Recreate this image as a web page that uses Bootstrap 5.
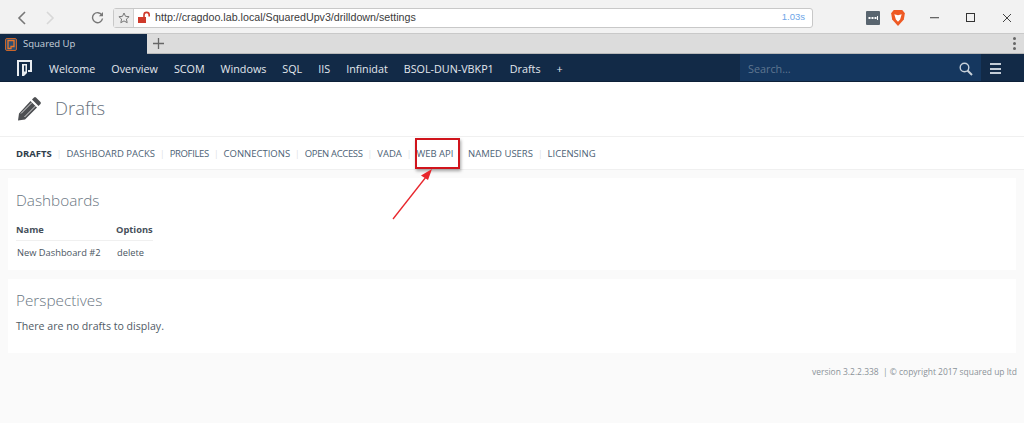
<!DOCTYPE html>
<html lang="en"><head><meta charset="utf-8"><title>Squared Up</title>
<link href="https://cdn.jsdelivr.net/npm/bootstrap@5.3.0/dist/css/bootstrap.min.css" rel="stylesheet">
<style>
html,body{height:423px;overflow:hidden}
body{background:#fafafa;font-family:"Open Sans","Noto Sans",sans-serif;font-size:10.5px;color:#4a5561;position:relative}
.chrome-bar{height:34px;background:#f2f2f2;border-bottom:1px solid #c9c9c9;padding:2px 0 0 16px}
.nav-ic{width:12px;height:16px;flex:none}
.reload-ic{margin-left:35px}
.addr{margin-left:9px;width:700px;height:20px;background:#fff;border:1px solid #c8c8c8;border-radius:3px;font-family:"Liberation Sans",sans-serif;font-size:11px;color:#3b3b3b}
.star-box{width:20px;height:18px;background:#ececec;border-right:1px solid #d0d0d0;flex:none}
.addr-url{margin-left:4px;font-size:10.7px}
.addr-time{margin-left:auto;padding-right:7px;color:#6ea5e8;font-size:9.5px}
.ext-a{margin-left:53px;flex:none}
.ext-b{margin-left:10px;flex:none}
.win-min{margin-left:24px;flex:none}
.win-max{margin-left:27px;flex:none}
.win-close{margin-left:26px;flex:none}
.tabstrip{height:20px;background:#dcdcdc;border-bottom:1px solid #b9b9b9}
.tab-on{width:147px;height:20px;background:#122a47;color:#c9d2dc;font-size:9.5px;padding:2px 0 0 5px;gap:6px}
.tab-plus{margin-left:6px;flex:none}
.tab-dots{margin-left:auto;width:3px;margin-right:8px;gap:2px}
.tab-dots span{width:3px;height:3px;background:#666;border-radius:50%}
.topnav{height:28px;background:#122a47;color:#e3e8ee;font-size:10.75px;border-bottom:1px solid #0d2038}
.brand-mark{margin-left:17px;margin-right:17px;flex:none}
.topnav-items{gap:16px;padding-top:3px}
.search-box{margin-left:auto;width:241px;height:100%;background:#15375f;color:#5f7690;font-size:10.8px;padding:3px 8px 0 8px}
.burger{width:43px;height:100%;flex:none;padding:2px 0 0 9px}
.burger span{width:11px;height:2px;background:#c3ccd6}
.burger>div{gap:2.500px}
.head-band{height:55px;background:#fff;padding:0 0 2px 17px;border-bottom:1px solid #f0f0f0}
.head-title{font-size:18.400px;font-weight:300;color:#68727e;margin:0 0 0 13px;line-height:1}
.subnav-band{height:33px;background:#fff;border-bottom:1px solid #f0f0f0;padding:3px 0 0 16px;font-size:9.5px;color:#4d6275}
.subnav-band b{color:#2f3d4b;font-weight:700}
.sep{color:#cfd4d8;margin:0 4.750px;font-weight:300}
.sep-clear{visibility:hidden}
.snug{letter-spacing:-.35px}
.panel{background:#fff;margin:0 8px;padding:0 8px}
.panel-a{margin-top:8px;height:92px;padding-top:12px}
.panel-b{margin-top:9px;height:74px;padding-top:11px}
.panel-title{font-size:15.300px;font-weight:300;color:#6a7682;line-height:20px;margin:0}
.draft-tbl{width:137px;margin-top:12px;font-size:9.300px;border-collapse:collapse}
.draft-tbl th{font-weight:700;color:#46505a;height:15px;padding:0 0 3px;border-bottom:1px solid #f0f0f0;box-sizing:content-box}
.draft-tbl td{padding-top:5px;color:#4a5561}
.col-name{width:100px}
.empty-msg{margin:9px 0 0;font-size:10.600px;color:#4f5a65}
.foot-line{text-align:right;padding:13px 7px 0 0;font-size:8.450px;color:#8a9299}
.callout{position:absolute;left:415px;top:138px;width:45px;height:31px;border:2px solid #d0141c;box-shadow:1px 2px 3px rgba(0,0,0,.35)}
.arrow-art{position:absolute;left:385px;top:160px}
</style></head><body>
<div class="chrome-bar d-flex align-items-center">
 <svg class="nav-ic" viewBox="0 0 12 16"><path d="M9 2 3 8l6 6" fill="none" stroke="#777" stroke-width="1.6"/></svg>
 <svg class="nav-ic ms-3" viewBox="0 0 12 16"><path d="M3 2l6 6-6 6" fill="none" stroke="#d8d8d8" stroke-width="1.6"/></svg>
 <svg class="reload-ic" width="13" height="13" viewBox="0 0 13 13"><path d="M10.8 4A5 5 0 1 0 11.5 7.5" fill="none" stroke="#777" stroke-width="1.4"/><path d="M12 1v4.2H7.8z" fill="#777"/></svg>
 <div class="addr d-flex align-items-center">
  <div class="star-box d-flex align-items-center justify-content-center"><svg width="12" height="12" viewBox="0 0 12 12"><path d="M6 1l1.5 3.3 3.6.4-2.7 2.400.8 3.600L6 8.900 2.800 10.700l.8-3.600L.9 4.700l3.600-.4z" fill="none" stroke="#777"/></svg></div>
  <svg class="ms-1" width="13" height="13" viewBox="0 0 13 13"><rect x="0" y="6" width="8" height="6" fill="#cf3a2b"/><path d="M6 6V4a2.600 2.600 0 0 1 5.200 0v1.500" fill="none" stroke="#cf3a2b" stroke-width="1.6"/></svg>
  <span class="addr-url">http://cragdoo.lab.local/SquaredUpv3/drilldown/settings</span>
  <span class="addr-time">1.03s</span>
 </div>
 <svg class="ext-a" width="14" height="14" viewBox="0 0 14 14"><rect width="14" height="14" rx="1" fill="#59656f"/><rect x="2.500" y="6" width="2" height="2" fill="#fff"/><rect x="5.500" y="6" width="2" height="2" fill="#fff"/><rect x="8.500" y="6" width="2" height="2" fill="#fff"/><rect x="11" y="5" width="1" height="4" fill="#fff"/></svg>
 <svg class="ext-b" width="16" height="18" viewBox="0 0 15 17"><path d="M3.500 1h8L14 4l-1 6-5.500 6L2 10 1 4z" fill="#ee5a24"/><path d="M4 5l3.500 1L11 5l-1.500 5-2 2-2-2z" fill="#fff"/></svg>
 <svg class="win-min" width="9" height="2" viewBox="0 0 9 2"><rect width="9" height="1.300" fill="#666"/></svg>
 <svg class="win-max" width="10" height="10" viewBox="0 0 10 10"><rect x=".5" y=".5" width="8" height="8" fill="none" stroke="#333"/></svg>
 <svg class="win-close" width="10" height="10" viewBox="0 0 10 10"><path d="M1 1l8 8M9 1 1 9" stroke="#444"/></svg>
</div>
<div class="tabstrip d-flex align-items-center">
 <div class="tab-on d-flex align-items-center">
  <svg width="12" height="13" viewBox="0 0 12 13"><rect x=".5" y=".5" width="11" height="12" rx="1.500" fill="#2a4d72" stroke="#c9652a"/><path d="M3 2.500h6v6H6v2H3z" fill="none" stroke="#e9762b" stroke-width="1.300"/></svg>
  <span>Squared Up</span>
 </div>
 <svg class="tab-plus" width="11" height="11" viewBox="0 0 11 11"><path d="M5.500 0v11M0 5.500h11" stroke="#666" stroke-width="1.300"/></svg>
 <div class="tab-dots d-flex flex-column"><span></span><span></span><span></span></div>
</div>
<div class="topnav d-flex align-items-center">
 <svg class="brand-mark" width="15" height="16" viewBox="0 0 15 16"><path d="M0 0h15v12h-4v-2h2V2H2v14H0z" fill="#e9edf1"/><path d="M5 4h5v9l-3 3H5z" fill="#e9edf1"/><path d="M7 5.500h1.500v6H7z" fill="#122a47"/></svg>
 <div class="d-flex topnav-items">
  <span>Welcome</span><span>Overview</span><span>SCOM</span><span>Windows</span><span>SQL</span><span>IIS</span><span>Infinidat</span><span>BSOL-DUN-VBKP1</span><span>Drafts</span><span>+</span>
 </div>
 <div class="search-box d-flex align-items-center justify-content-between">
  <span>Search...</span>
  <svg width="14" height="14" viewBox="0 0 14 14"><circle cx="5.500" cy="5.500" r="4.300" fill="none" stroke="#c8d1da" stroke-width="1.400"/><path d="M8.500 8.500 13 13" stroke="#c8d1da" stroke-width="2"/></svg>
 </div>
 <div class="burger d-flex align-items-center"><div class="d-flex flex-column"><span></span><span></span><span></span></div></div>
</div>
<div class="head-band d-flex align-items-center">
 <svg width="25" height="25" viewBox="0 0 25 25"><path d="M17 1.500a1.500 1.500 0 0 1 2 0l4.500 4.500a1.500 1.500 0 0 1 0 2L21.500 10 15 3.500zM13.500 5 20 11.500 8 23.500 1 24.500l1-7z" fill="#4d4f52"/><path d="M4 17.500 15 6.500M7.500 21 18.500 10" stroke="#fff" stroke-width=".8"/></svg>
 <h1 class="head-title">Drafts</h1>
</div>
<div class="subnav-band d-flex align-items-center">
 <b>DRAFTS</b><span class="sep">|</span><span>DASHBOARD PACKS</span><span class="sep">|</span><span class="snug">PROFILES</span><span class="sep">|</span><span>CONNECTIONS</span><span class="sep">|</span><span class="snug">OPEN ACCESS</span><span class="sep">|</span><span>VADA</span><span class="sep">|</span><span>WEB API</span><span class="sep sep-clear">|</span><span>NAMED USERS</span><span class="sep">|</span><span>LICENSING</span>
</div>
<div class="panel panel-a">
 <h2 class="panel-title">Dashboards</h2>
 <table class="draft-tbl"><thead><tr><th class="col-name">Name</th><th>Options</th></tr></thead><tbody><tr><td>New Dashboard #2</td><td>delete</td></tr></tbody></table>
</div>
<div class="panel panel-b">
 <h2 class="panel-title">Perspectives</h2>
 <p class="empty-msg">There are no drafts to display.</p>
</div>
<div class="foot-line">version 3.2.2.338 &nbsp;| © copyright 2017 squared up ltd</div>
<div class="callout"></div>
<svg class="arrow-art" width="60" height="65" viewBox="0 0 60 65"><path d="M8 59 41 17" stroke="#e8262c" stroke-width="1.300"/><path d="M47 9 36 15.500 43 20z" fill="#e8262c"/></svg>
</body></html>
